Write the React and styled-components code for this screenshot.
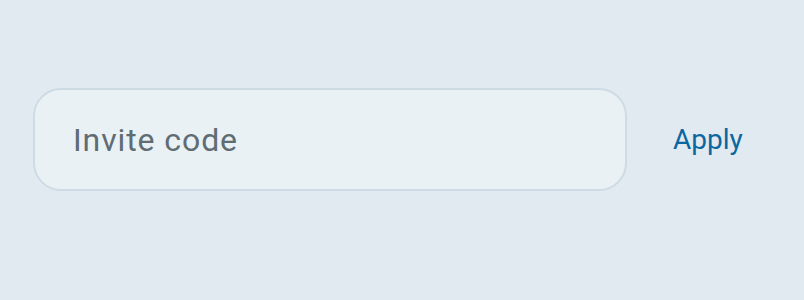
import React from 'react'
import styled, { createGlobalStyle } from 'styled-components'

const Global = createGlobalStyle`
  html, body {
    margin: 0;
    padding: 0;
    background: #e2eaf1;
    font-family: Roboto, "Liberation Sans", sans-serif;
  }
`

const Page = styled.div`
  width: 804px;
  height: 300px;
  box-sizing: border-box;
  padding: 88px 0 0 33px;
  background: #e2eaf1;
`

const Row = styled.form`
  display: flex;
  align-items: center;
  gap: 46px;
  margin: 0;
`

const Field = styled.input`
  width: 594px;
  height: 103px;
  box-sizing: border-box;
  padding: 0 38px;
  border: 2px solid #cddbe5;
  border-radius: 28px;
  background: #e9f1f5;
  font-family: Roboto, "Liberation Sans", sans-serif;
  font-size: 32px;
  letter-spacing: 0.9px;
  color: #33414a;
  outline: none;

  &::placeholder {
    color: #5f6c73;
  }
`

const ApplyButton = styled.button`
  padding: 0;
  border: none;
  background: none;
  font-family: Roboto, "Liberation Sans", sans-serif;
  font-size: 28px;
  color: #0b679f;
  cursor: pointer;
`

export default function App() {
  return (
    <>
      <Global />
      <Page>
        <Row onSubmit={e => e.preventDefault()}>
          <Field placeholder="Invite code" />
          <ApplyButton type="submit">Apply</ApplyButton>
        </Row>
      </Page>
    </>
  )
}
